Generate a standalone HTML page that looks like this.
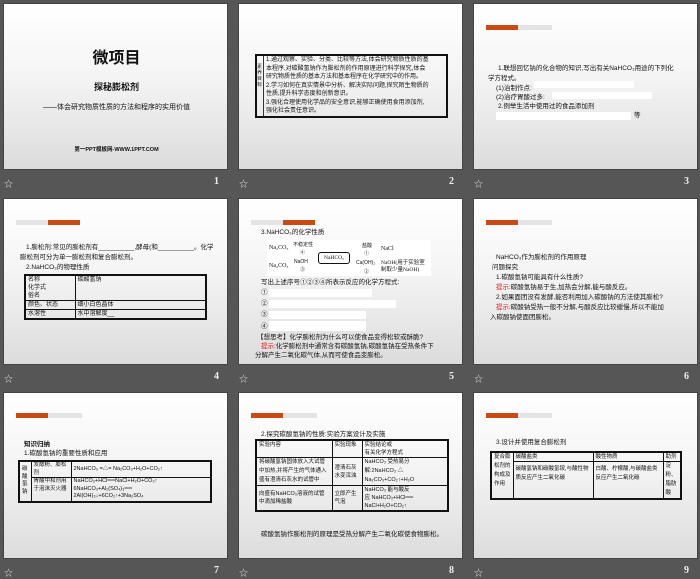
<!DOCTYPE html>
<html><head><meta charset="utf-8">
<style>
*{margin:0;padding:0;box-sizing:border-box}
body{width:700px;height:577px;background:#565656;position:relative;overflow:hidden;font-family:"Liberation Sans","Noto Sans CJK SC",sans-serif;color:#111}
.s{position:absolute;width:225px;height:167px;background:linear-gradient(#ffffff 0%,#f4f4f4 45%,#dcdcdc 100%);overflow:hidden;border:1px solid #444}
.s div,.s span{position:absolute;white-space:nowrap}
.lab{position:absolute;color:#eee;font-size:10px;font-family:"Liberation Serif","Noto Serif CJK SC",serif;font-weight:bold}
.st{position:absolute;color:#ddd;font-size:9px}
.t{font-size:6.5px;line-height:9px}
.o{background:#c94a14;height:5px}
.g{background:#e4e4e4;height:5px}
.w{background:#fff;height:7px}
.red{color:#e02020}
table{border-collapse:collapse;position:absolute;font-size:6px;line-height:8px}
td{border:1px solid #111;padding:0 2px;vertical-align:top;white-space:nowrap}
</style></head><body>

<!-- slide 1 -->
<div class="s" style="left:3px;top:3px">
 <div style="left:0;width:225px;top:40px;text-align:center;font-size:16px;font-weight:bold">微项目</div>
 <div style="left:0;width:225px;top:76px;text-align:center;font-size:9px;font-weight:bold">探秘膨松剂</div>
 <div style="left:0;width:225px;top:98px;text-align:center;font-size:7px">——体会研究物质性质的方法和程序的实用价值</div>
 <div style="left:0;width:225px;top:141px;text-align:center;font-size:5.5px;font-weight:bold">第一PPT模板网-WWW.1PPT.COM</div>
</div>
<div class="st" style="left:4px;top:177px">☆</div><div class="lab" style="left:214px;top:176px">1</div>

<!-- slide 2 -->
<div class="s" style="left:238px;top:3px">
 <div style="left:16px;top:50px;width:193px;height:64px;border:2px solid #111"></div>
 <div style="left:24px;top:52px;width:1px;height:60px;background:#333"></div>
 <div style="left:18px;top:60px;font-size:5px;line-height:6px;white-space:normal;width:6px">素养目标</div>
 <div class="t" style="left:27px;top:52px;font-size:6px;line-height:8.5px">1.通过观察、实验、分类、比较等方法,体会研究物质性质的基<br>本程序,对碳酸氢钠作为膨松剂的作用原理进行科学探究,体会<br>研究物质性质的基本方法和基本程序在化学研究中的作用。<br>2.学习如何在真实情景中分析、解决实际问题,探究陌生物质的<br>性质,提升科学态度和创新意识。<br>3.强化合理使用化学品的安全意识,能够正确使用食用添加剂,<br>强化社会责任意识。</div>
</div>
<div class="st" style="left:239px;top:177px">☆</div><div class="lab" style="left:449px;top:176px">2</div>

<!-- slide 3 -->
<div class="s" style="left:473px;top:3px">
 <div class="o" style="left:12px;top:21px;width:32px"></div>
 <div class="g" style="left:44px;top:21px;width:34px"></div>
 <div class="t" style="left:24px;top:60px">1.联想回忆钠的化合物的知识,写出有关NaHCO₃用途的下列化</div>
 <div class="t" style="left:14px;top:70px">学方程式。</div>
 <div class="w" style="left:60px;top:77px;width:100px"></div>
 <div class="t" style="left:22px;top:80px">(1)治制作点:</div>
 <div class="w" style="left:78px;top:88px;width:100px"></div>
 <div class="t" style="left:22px;top:89px">(2)治疗胃酸过多:</div>
 <div class="t" style="left:24px;top:98px">2.例举生活中使用过的食品添加剂</div>
 <div class="w" style="left:22px;top:108px;width:135px;height:8px"></div>
 <div class="t" style="left:160px;top:107px">等</div>
</div>
<div class="st" style="left:474px;top:177px">☆</div><div class="lab" style="left:684px;top:176px">3</div>

<!-- slide 4 -->
<div class="s" style="left:3px;top:198px">
 <div class="g" style="left:12px;top:21px;width:32px"></div>
 <div class="o" style="left:44px;top:21px;width:32px"></div>
 <div class="t" style="left:22px;top:44px">1.膨松剂:常见的膨松剂有__________,酵母(和__________。化学</div>
 <div class="t" style="left:16px;top:54px">膨松剂可分为单一膨松剂和复合膨松剂。</div>
 <div class="t" style="left:22px;top:64px">2.NaHCO₃的物理性质</div>
 <table style="left:20px;top:75px;width:183px;border:2px solid #111">
  <tr><td style="width:50px">名称<br>化学式<br>俗名</td><td>碳酸氢钠</td></tr>
  <tr><td>颜色、状态</td><td>细小白色晶体</td></tr>
  <tr><td>水溶性</td><td>水中溶解度__</td></tr>
 </table>
</div>
<div class="st" style="left:4px;top:372px">☆</div><div class="lab" style="left:214px;top:371px">4</div>

<!-- slide 5 -->
<div class="s" style="left:238px;top:198px">
 <div class="g" style="left:12px;top:21px;width:32px"></div>
 <div class="o" style="left:44px;top:21px;width:32px"></div>
 <div class="t" style="left:22px;top:29px">3.NaHCO₃的化学性质</div>
 <div style="left:28px;top:41px;width:164px;height:36px;background:#fff"></div>
 <div style="left:30px;top:46px;font-size:6px;font-family:'Liberation Serif',serif">Na₂CO₃</div>
 <div style="left:30px;top:64px;font-size:6px;font-family:'Liberation Serif',serif">Na₂CO₃</div>
 <div style="left:54px;top:42px;font-size:5px">不稳定性</div>
 <div style="left:61px;top:50px;font-size:5px">④</div>
 <div style="left:55px;top:60px;font-size:5px">NaOH</div>
 <div style="left:61px;top:67px;font-size:5px">③</div>
 <div style="left:79px;top:53px;width:32px;height:12px;border:1px solid #111;border-radius:3px;font-size:5.5px;text-align:center;line-height:10px;font-family:'Liberation Serif',serif">NaHCO₃</div>
 <div style="left:123px;top:43px;font-size:5px">盐酸</div>
 <div style="left:125px;top:51px;font-size:5px">①</div>
 <div style="left:117px;top:61px;font-size:5px">Ca(OH)₂</div>
 <div style="left:125px;top:69px;font-size:5px">②</div>
 <div style="left:142px;top:47px;font-size:6px;font-family:'Liberation Serif',serif">NaCl</div>
 <div style="left:142px;top:61px;font-size:5.5px;line-height:7px;font-family:'Liberation Serif',serif">NaOH(用于实验室<br>制取少量NaOH)</div>
 <div class="t" style="left:22px;top:79px">写出上述序号①②③④所表示反应的化学方程式:</div>
 <div class="w" style="left:30px;top:90px;width:103px;height:8px"></div><div class="t" style="left:22px;top:89px">①</div>
 <div class="w" style="left:30px;top:101px;width:127px;height:8px"></div><div class="t" style="left:22px;top:100px">②</div>
 <div class="w" style="left:30px;top:112px;width:97px;height:8px"></div><div class="t" style="left:22px;top:111px">③</div>
 <div class="w" style="left:30px;top:122px;width:97px;height:10px"></div><div class="t" style="left:22px;top:123px">④</div>
 <div class="t" style="left:18px;top:134px">【想思考】化学膨松剂为什么可以使食品变得松软或酥脆?</div>
 <div class="t" style="left:22px;top:143px"><span class="red" style="position:static">提示</span>:化学膨松剂中通常含有碳酸氢钠,碳酸氢钠在受热条件下</div>
 <div class="t" style="left:16px;top:152px">分解产生二氧化碳气体,从而可使食品变膨松。</div>
</div>
<div class="st" style="left:239px;top:372px">☆</div><div class="lab" style="left:449px;top:371px">5</div>

<!-- slide 6 -->
<div class="s" style="left:473px;top:198px">
 <div class="o" style="left:12px;top:21px;width:32px"></div>
 <div class="g" style="left:44px;top:21px;width:34px"></div>
 <div class="t" style="left:22px;top:54px">NaHCO₃作为膨松剂的作用原理</div>
 <div class="t" style="left:18px;top:64px">问题探究</div>
 <div class="t" style="left:22px;top:74px">1.碳酸氢钠可能具有什么性质?</div>
 <div class="t" style="left:22px;top:84px"><span class="red" style="position:static">提示</span>:碳酸氢钠易于生,加热会分解,能与酸反应。</div>
 <div class="t" style="left:22px;top:94px">2.如果面团没有发酵,能否利用加入碳酸钠的方法使其膨松?</div>
 <div class="t" style="left:22px;top:104px"><span class="red" style="position:static">提示</span>:碳酸钠受热一般不分解,与酸反应比较缓慢,所以不能加</div>
 <div class="t" style="left:16px;top:114px">入碳酸钠使面团膨松。</div>
</div>
<div class="st" style="left:474px;top:372px">☆</div><div class="lab" style="left:684px;top:371px">6</div>

<!-- slide 7 -->
<div class="s" style="left:3px;top:392px">
 <div class="o" style="left:12px;top:20px;width:32px"></div>
 <div class="g" style="left:44px;top:20px;width:34px"></div>
 <div class="t" style="left:20px;top:47px;font-weight:bold">知识归纳</div>
 <div class="t" style="left:20px;top:56px">1.碳酸氢钠的重要性质和应用</div>
 <table style="left:14px;top:67px;width:194px;border:2px solid #111;font-size:5.5px;line-height:7.5px">
  <tr><td rowspan="2" style="width:12px;white-space:normal;vertical-align:middle">碳酸氢钠</td><td style="width:40px;white-space:normal">发酵粉、膨松剂</td><td style="vertical-align:middle">2NaHCO₃ =△= Na₂CO₃+H₂O+CO₂↑</td></tr>
  <tr><td style="white-space:normal">胃酸中和剂用于泡沫灭火器</td><td>NaHCO₃+HCl══NaCl+H₂O+CO₂↑<br>6NaHCO₃+Al₂(SO₄)₃══<br>2Al(OH)₃↓+6CO₂↑+3Na₂SO₄</td></tr>
 </table>
</div>
<div class="st" style="left:4px;top:566px">☆</div><div class="lab" style="left:214px;top:565px">7</div>

<!-- slide 8 -->
<div class="s" style="left:238px;top:392px">
 <div class="o" style="left:12px;top:20px;width:32px"></div>
 <div class="g" style="left:44px;top:20px;width:34px"></div>
 <div class="t" style="left:22px;top:37px">2.探究碳酸氢钠的性质:实验方案设计及实施</div>
 <table style="left:16px;top:46px;width:194px;border:2px solid #111;font-size:5.5px;line-height:8px">
  <tr><td style="width:76px">实验内容</td><td style="width:30px">实验现象</td><td>实验结论或<br>有关化学方程式</td></tr>
  <tr><td style="white-space:normal;line-height:9px">将碳酸氢钠固体放入大试管中加热,并将产生的气体通入盛有澄清石灰水的试管中</td><td style="white-space:normal;vertical-align:middle">澄清石灰水变浑浊</td><td style="line-height:9px">NaHCO₃ 受热易分<br>解:2NaHCO₃ △<br>Na₂CO₃+CO₂↑+H₂O</td></tr>
  <tr><td style="white-space:normal;vertical-align:middle">向盛有NaHCO₃溶液的试管中滴加稀盐酸</td><td style="white-space:normal;vertical-align:middle">立即产生气泡</td><td>NaHCO₃ 能与酸反<br>应 NaHCO₃+HCl══<br>NaCl+H₂O+CO₂↑</td></tr>
 </table>
 <div class="t" style="left:22px;top:137px">碳酸氢钠作膨松剂的原理是受热分解产生二氧化碳使食物膨松。</div>
</div>
<div class="st" style="left:239px;top:566px">☆</div><div class="lab" style="left:449px;top:565px">8</div>

<!-- slide 9 -->
<div class="s" style="left:473px;top:392px">
 <div class="o" style="left:12px;top:20px;width:32px"></div>
 <div class="g" style="left:44px;top:20px;width:34px"></div>
 <div class="t" style="left:22px;top:45px">3.设计并使用复合膨松剂</div>
 <table style="left:16px;top:58px;width:192px;border:2px solid #111;font-size:5.5px;line-height:8px">
  <tr><td rowspan="2" style="width:22px;white-space:normal;line-height:9px">复合膨松剂的构成及作用</td><td style="width:80px">碳酸盐类</td><td style="width:70px">酸性物质</td><td>助剂</td></tr>
  <tr><td style="white-space:normal;line-height:9px;padding-top:3px">碳酸氢钠和碳酸氢铵,与酸性物质反应产生二氧化碳</td><td style="white-space:normal;line-height:9px;padding-top:3px">白酸、柠檬酸,与碳酸盐类反应产生二氧化碳</td><td style="white-space:normal;line-height:9px">淀粉、脂肪酸</td></tr>
 </table>
</div>
<div class="st" style="left:474px;top:566px">☆</div><div class="lab" style="left:684px;top:565px">9</div>

</body></html>
